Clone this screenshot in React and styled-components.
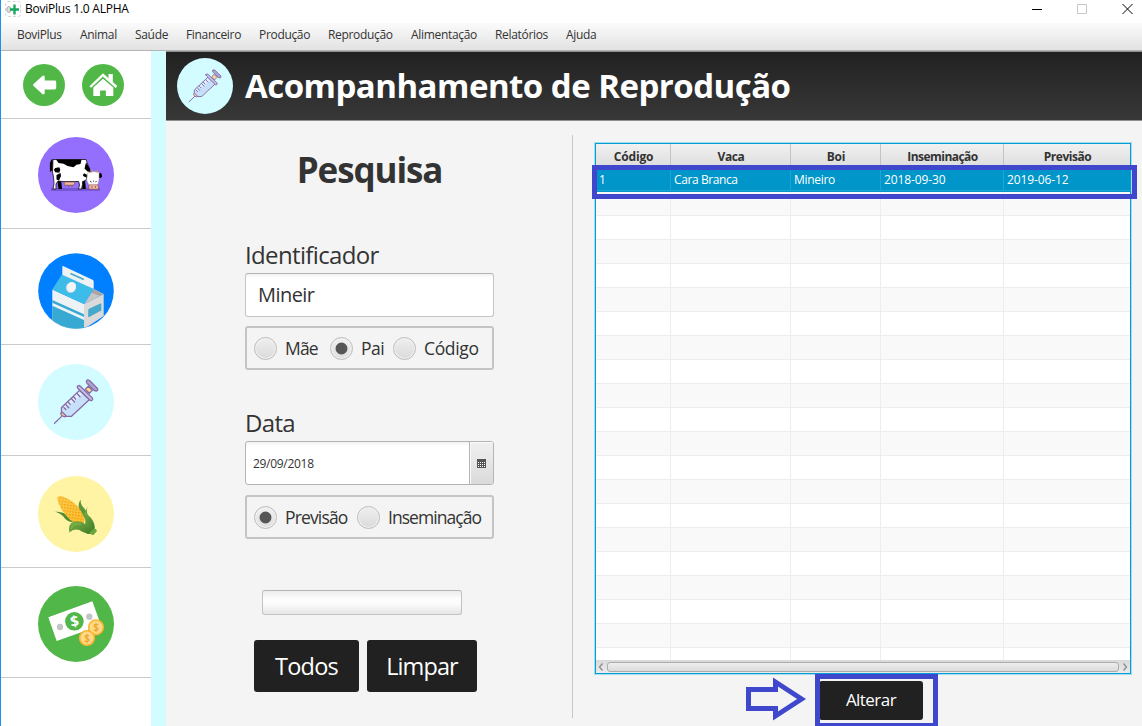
import React from 'react';
import styled, { createGlobalStyle, css } from 'styled-components';

const Global = createGlobalStyle`
  * { box-sizing: border-box; }
  body { margin: 0; overflow: hidden; }
  svg { display: block; }
`;

const Window = styled.div`
  position: relative;
  display: flex;
  flex-direction: column;
  width: 1142px;
  height: 726px;
  overflow: hidden;
  background: #fff;
  border-left: 1px solid #1b90f5;
  font-family: 'Open Sans', 'Noto Sans', sans-serif;
  font-size: 12px;
  letter-spacing: -0.03em;
  color: #333;
  white-space: nowrap;
`;

const TitleBar = styled.header`
  display: flex;
  align-items: flex-start;
  justify-content: space-between;
  height: 23px;
  padding: 1px 9px 0 4px;
  color: #000;
`;

const AppName = styled.div`
  display: flex;
  align-items: center;
  gap: 4px;
  height: 16px;
  line-height: 16px;
  letter-spacing: -0.24px;
`;

const WindowControls = styled.div`
  display: flex;
  gap: 34px;
  padding-top: 2px;
`;

const MenuBar = styled.nav`
  display: flex;
  flex: none;
  height: 28px;
  padding-left: 16px;
  background: linear-gradient(#fbfbfb, #e2e2e2);
  border-bottom: 1px solid #b4b4b4;
`;

const MenuItem = styled.span`
  width: ${(p) => p.$width}px;
  line-height: 24px;
  letter-spacing: -0.32px;
`;

const Body = styled.div`
  display: flex;
  flex: 1;
  min-height: 0;
`;

const Sidebar = styled.aside`
  width: 150px;
  flex: none;
`;

const NavButtons = styled.div`
  display: flex;
  gap: 17px;
  height: 68px;
  padding: 13px 0 0 22px;
  border-bottom: 1px solid #cbcbcb;
`;

const SideItem = styled.div`
  display: flex;
  justify-content: center;
  height: ${(p) => p.$height}px;
  padding-top: ${(p) => p.$top}px;
  border-bottom: 1px solid #cbcbcb;
`;

const Stripe = styled.div`
  width: 15px;
  flex: none;
  background: #d2fcff;
`;

const Main = styled.main`
  display: flex;
  flex: 1;
  flex-direction: column;
  min-width: 0;
  background: #f4f4f4;
`;

const PageHeader = styled.div`
  display: flex;
  align-items: center;
  gap: 12px;
  height: 70px;
  padding: 0 0 0 11px;
  background: linear-gradient(#212121, #383838);
  border-top: 1px solid #8f8f8f;
  border-bottom: 1px solid #8f8f8f;
`;

const PageTitle = styled.h1`
  margin: 0;
  color: #fff;
  font-size: 33px;
  font-weight: 700;
  line-height: 66px;
  letter-spacing: -0.52px;
`;

const Content = styled.div`
  display: flex;
  flex: 1;
  min-height: 0;
`;

const SearchPanel = styled.section`
  display: flex;
  flex-direction: column;
  width: 407px;
  margin: 14px 0 8px;
  padding: 0 78px 0 79px;
  border-right: 1px solid #c8c8c8;
`;

const SearchTitle = styled.h2`
  margin: 9px 0 42px;
  height: 50px;
  font-size: 35px;
  font-weight: 700;
  line-height: 52px;
  letter-spacing: -1.1px;
  text-align: center;
`;

const FieldLabel = styled.label`
  flex: none;
  height: 37px;
  font-size: 24px;
  line-height: 38px;
  letter-spacing: -0.65px;
`;

const fieldBox = css`
  display: flex;
  align-items: center;
  flex: none;
  height: 44px;
  background: linear-gradient(#f2f2f2, #fff 4px);
  border: 1px solid #c4c4c4;
  border-top-color: #b4b4b4;
  border-radius: 3px;
`;

const TextField = styled.div`
  ${fieldBox}
  padding: 0 0 2px 12px;
  font-size: 20px;
  letter-spacing: -0.55px;
`;

const DateField = styled.div`
  ${fieldBox}
  justify-content: space-between;
  padding-left: 7px;
  border-color: #b4b4b4;
  letter-spacing: -0.3px;
`;

const CalendarButton = styled.div`
  display: flex;
  align-items: center;
  justify-content: center;
  width: 24px;
  height: 42px;
  background: linear-gradient(#f0f0f0, #dadada);
  border-left: 1px solid #b4b4b4;
  border-radius: 0 2px 2px 0;
  box-shadow: inset 1px 1px 0 #fafafa;
`;

const RadioGroup = styled.div`
  display: flex;
  align-items: center;
  flex: none;
  height: 44px;
  margin: ${(p) => p.$before}px 0 ${(p) => p.$after}px;
  padding-left: 7px;
  border: 2px solid #c4c4c4;
  border-radius: 3px;
  font-size: 17.5px;
`;

const RadioOption = styled.label`
  display: flex;
  align-items: center;
  gap: 8px;
  flex: none;
  width: ${(p) => p.$width}px;
  letter-spacing: ${(p) => p.$spacing}px;
`;

const RadioDot = styled.span`
  flex: none;
  width: 23px;
  height: 23px;
  border: 1px solid #bcbcbc;
  border-radius: 50%;
  background: ${(p) =>
    p.$checked
      ? 'radial-gradient(circle, #555 5.4px, transparent 6.4px), linear-gradient(#efefef, #dedede)'
      : 'linear-gradient(#efefef, #dadada)'};
  box-shadow: inset 0 0 0 1px #f3f3f3;
`;

const Progress = styled.div`
  width: 200px;
  height: 25px;
  flex: none;
  margin: 0 0 25px 17px;
  border: 1px solid #c2c2c2;
  border-top-color: #b4b4b4;
  border-radius: 3px;
  background: linear-gradient(#ececec, #fdfdfd 35%, #fcfcfc 55%, #e6e6e6);
`;

const ButtonRow = styled.div`
  display: flex;
  gap: 8px;
  margin-left: 9px;
`;

const DarkButton = styled.div`
  display: flex;
  align-items: center;
  justify-content: center;
  width: ${(p) => p.$width}px;
  height: ${(p) => p.$height}px;
  padding-bottom: ${(p) => p.$lift || 0}px;
  background: #212121;
  border-radius: 3px;
  color: #fff;
  font-size: ${(p) => p.$size}px;
  letter-spacing: ${(p) => p.$spacing}px;
`;

const Results = styled.section`
  display: flex;
  flex-direction: column;
  align-items: flex-start;
  padding: 22px 0 0 22px;
`;

const TableFrame = styled.div`
  display: flex;
  flex-direction: column;
  width: 536px;
  height: 531px;
  margin-bottom: 7px;
  overflow: hidden;
  background: #fff;
  border: 1px solid #039ed3;
  box-shadow: 0 0 0 1px #a5dcee;
`;

const gridColumns = css`
  display: grid;
  grid-template-columns: 75px 120px 90px 123px 1fr;
  flex: none;
  height: 24px;
`;

const HeadRow = styled.div`
  ${gridColumns}
  background: linear-gradient(#f1f1f1, #dcdcdc);
  font-weight: 700;
  text-align: center;
`;

const HeadCell = styled.div`
  padding-left: 1px;
  line-height: 25px;
  letter-spacing: ${(p) => p.$spacing}px;
  border-right: 1px solid #c4c4c4;
  &:last-child { border-right: 0; }
`;

const Row = styled.div`
  ${gridColumns}
  background: ${(p) => (p.$selected ? '#0096c9' : p.$odd ? '#f9f9f9' : '#fff')};
  color: #fff;
`;

const Cell = styled.div`
  height: ${(p) => (p.$selected ? 23 : 24)}px;
  padding-left: 3px;
  line-height: 23px;
  letter-spacing: ${(p) => p.$spacing}px;
  border-right: 1px solid ${(p) => (p.$selected ? '#1fa5d2' : '#ededed')};
  border-bottom: 1px solid ${(p) => (p.$selected ? '#1fa5d2' : '#ededed')};
  &:last-child { border-right: 0; }
`;

const Rows = styled.div`
  flex: 1;
  min-height: 0;
  overflow: hidden;
`;

const ScrollBar = styled.div`
  display: flex;
  align-items: center;
  justify-content: space-between;
  flex: none;
  height: 13px;
  padding: 0 2px;
  background: linear-gradient(#d9d9d9, #ebebeb);
`;

const Thumb = styled.div`
  width: 512px;
  height: 10px;
  border: 1px solid #ababab;
  border-radius: 3px;
  background: linear-gradient(#eeeeee, #dadada);
`;

const ActionSlot = styled.div`
  margin-left: 224px;
`;

const Mark = styled.div`
  position: absolute;
  left: ${(p) => p.$x}px;
  top: ${(p) => p.$y}px;
  width: ${(p) => p.$w}px;
  height: ${(p) => p.$h}px;
  border: 5px solid #3f48cc;
`;

const ArrowMark = styled.svg`
  position: absolute;
  left: 744px;
  top: 676px;
`;

const AppLogo = () => (
  <svg width="16" height="16" viewBox="0 0 16 16">
    <rect x="0.5" y="0.5" width="15" height="15" rx="2" fill="#fff" stroke="#d5d5d5" strokeDasharray="3 2" />
    <ellipse cx="3.8" cy="8.5" rx="2" ry="3" fill="#ddd" stroke="#aaa" />
    <path d="M9.5 3.5v10M5 8.5h9" stroke="#19a85b" strokeWidth="2.4" />
  </svg>
);

const BackIcon = () => (
  <svg width="42" height="42" viewBox="0 0 42 42">
    <circle cx="21" cy="21" r="21" fill="#51b848" />
    <path d="M11.5 21 20.3 13v5h11.5v6H20.3v5z" fill="#fff" stroke="#fff" strokeWidth="2.8" strokeLinejoin="round" />
  </svg>
);

const HomeIcon = () => (
  <svg width="42" height="42" viewBox="0 0 42 42">
    <circle cx="21" cy="21" r="21" fill="#51b848" />
    <path d="M26.5 10h4.3v9l-4.3-4z" fill="#fff" />
    <path d="M8.3 23 21 11l13.5 12" fill="none" stroke="#fff" strokeWidth="2.4" />
    <path d="M11.3 23.5 21 14.8l10.3 8.7V32h-7.4v-5.5h-5.8V32h-6.8z" fill="#fff" />
  </svg>
);

const CowIcon = () => (
  <svg width="76" height="76" viewBox="0 0 76 76">
    <circle cx="38" cy="38" r="38" fill="#946efd" />
    <path d="M13 51h49v3H13z" fill="#7656d3" />
    <path d="M14.5 22.5 12.7 26v7.5l1.5-1V25" fill="none" stroke="#000" strokeWidth="1.6" />
    <path d="M19 41h4l1 11h-3.500zM44 42h3l.8 10h-3.500z" fill="#000" />
    <path d="M15 22.500h33l2.500 7 2 5.500-3 5-2 3.500-3 1v3l-1 4.500h-3l1-4-.8-3.500H25l-5-.5-2 3v5h-3l1-5.500-.5-6.500-1-5z" fill="#fff" stroke="#111" strokeWidth=".8" />
    <path d="M18 22.500h25.500l-1 4.500-4 .8-3 2.500-6-1.200-4-2.300-5-.8zM17.300 31l4-.8 1 2.500-1 3-4-.5-1.500-2.500zM18.500 38l4-2 .5 3-2 4.500-2.500-1zM48 25.500l3.500 5 1.500 4.500-3.500-.500-3-3z" fill="#000" />
    <path d="M26 45h11l-1 3h-1.500v1.500h-1V48h-2v1.500h-1V48H28v1h-1z" fill="#f2b8a3" stroke="#7a4b3c" strokeWidth=".6" />
    <path d="M49.500 38.500 46 36.800l-.5 2 3.500 1.500zM61 37l2-.5 .5 3.500-2 .5z" fill="#000" stroke="#000" />
    <path d="M49.500 36 55 34.500l6 .8v7.700l-1.300 5-8.500 1-2.500-6z" fill="#fff" stroke="#999" strokeWidth=".5" />
    <path d="m53.500 35.500-.8-2.500M59 35.500l.6-2.500" stroke="#d9896b" strokeWidth="1.200" />
    <path d="m52 44 1.500 1.200M55 44.200h1M58.500 44l-1 1.200" stroke="#222" strokeWidth=".9" />
    <path d="M51 47.800h9l.5 4.400H50.800z" fill="#f4b49f" stroke="#6b4335" strokeWidth=".5" />
    <path d="M54 49.500v1M57.500 49.500v1" stroke="#333" strokeWidth="1" />
  </svg>
);

const MilkIcon = () => (
  <svg width="76" height="76" viewBox="0 0 76 76">
    <defs>
      <clipPath id="milkRound"><circle cx="38" cy="38" r="37.7" /></clipPath>
    </defs>
    <circle cx="38" cy="38" r="37.8" fill="#0080ff" />
    <g clipPath="url(#milkRound)">
      <path d="M14.3 36.5 46 51v25H14.3z" fill="#edf3f5" />
      <path d="M14.3 47 46 61.3V64L14.3 49.8zM14.3 52.7 46 67v9H14.3z" fill="#38a9d2" />
      <path d="M46 51 65.7 41v22L46 76z" fill="#dadada" />
      <path d="M55.7 36 65.7 41 46 51z" fill="#c6c4c4" />
      <path d="m55.7 36 10 5-4 1.8-8.5-3z" fill="#aaa5a6" />
      <path d="M51 55.8 62.3 50.6q1-.3 1 .6v6.3L51.2 64q-1 .3-1-.6v-6.4z" fill="#45a9cc" />
      <path d="M24.3 21 55.7 36 46 51 14.3 36.5z" fill="#3ebce9" />
      <path d="M24.3 14q0-1.3 1.3-.8L54.5 26.7q1.2.6 1.2 2V36L24.3 21.8z" fill="#eef2f4" />
      <path d="m32.5 20.5 13.3 6" stroke="#43aace" strokeWidth="1.8" />
      <ellipse cx="33" cy="34.4" rx="5" ry="5.5" fill="#d9dfe2" transform="rotate(25 33 34.4)" />
      <ellipse cx="33.6" cy="34" rx="4.3" ry="5" fill="#f3f5f6" transform="rotate(25 33.6 34)" />
    </g>
  </svg>
);

const SyringeIcon = ({ size }) => (
  <svg width={size} height={size} viewBox="0 0 76 76">
    <circle cx="38" cy="38" r="38" fill="#d2fcff" />
    <g stroke="#8a6aa6" strokeWidth="1.3" strokeLinejoin="round" strokeLinecap="round">
      <path d="m16.5 59.3 7.5-7.2" />
      <path d="m24.5 47.5 4.2 4.3-2.5 1-2.7-1.5-.8-2z" fill="#ffd98c" />
      <path d="M41.5 26.5 23.5 43.5v4l5 4.8h5L51.5 35.5z" fill="#c6e0fa" />
      <path d="m41.5 27.5-16 15.5v2l8-5.5 11-9z" fill="#dff0fd" stroke="none" />
      <path d="m39 29.5 3 3.2M35.5 32.7l2.2 2.3M33.5 34.8l3 3.2M30 38l2.2 2.3M27.7 40.5l3 3.2M25.8 43.5l2 2" fill="none" />
      <path d="m47.3 25.3 3-3 4 4-3 3z" fill="#ffd98c" />
      <path d="M39.3 22.5q1.5-1.8 3-.3L54.3 34q1 2-.8 2.5-1 .3-2-.8L40 24.5q-.8-1-.7-2z" fill="#c3c6e8" />
      <path d="M48.5 16.8q1.2-1.6 3-.3l8 8q.8 2-.8 2.5l-2.5-.5-7-7q-1.2-1.3-.7-2.7z" fill="#a9a6cf" />
    </g>
  </svg>
);

const CornIcon = () => (
  <svg width="76" height="76" viewBox="0 0 76 76">
    <defs>
      <linearGradient id="cob" x1="0" y1="0" x2="1" y2="1">
        <stop offset="0" stopColor="#f7c53e" />
        <stop offset="1" stopColor="#fbb116" />
      </linearGradient>
      <linearGradient id="husk" x1="0" y1="0" x2="1" y2="1">
        <stop offset="0" stopColor="#7eb446" />
        <stop offset="1" stopColor="#3d7a28" />
      </linearGradient>
      <pattern id="kernels" width="3" height="3" patternUnits="userSpaceOnUse" patternTransform="rotate(8)">
        <rect x="0" y="0" width="1.5" height="1.5" fill="#f28a0f" opacity=".5" />
        <rect x="1.5" y="1.5" width="1.5" height="1.5" fill="#ffe36e" opacity=".6" />
      </pattern>
    </defs>
    <circle cx="38" cy="38" r="38" fill="#fff3a4" />
    <path d="M17 35.500q9 .5 13 4l8 6-5 .5q-5-1-8-6-3-3-8-4.500z" fill="#4f8d34" />
    <path d="M42.500 23.500q-4 7 .5 13l5 8 1.500-6q-1-4-4-7-3-3-3-8z" fill="#5a9738" />
    <path d="M19.200 22q1-3 6-1.300 8 3 14 9.300 5 5.500 7.300 13l-1 6-8-1.500q-7-4-12.500-12-5-7-5.800-13.500z" fill="url(#cob)" />
    <path d="M19.200 22q1-3 6-1.300 8 3 14 9.300 5 5.500 7.300 13l-1 6-8-1.500q-7-4-12.500-12-5-7-5.800-13.500z" fill="url(#kernels)" />
    <path d="M49.500 30.500q-1 4 0 8 7 6 7.300 13l-.8 4.500-6 2q-8-3-3-9.500 1-4-1-10 2-4 3.500-8z" fill="url(#husk)" />
    <path d="M31.500 56.500q-2-8 4-11 8-1.500 12 3l7 4.500-2 5q-7-1-11-4-6-2-10 2.500z" fill="url(#husk)" />
    <path d="M33 53q2-6 10-5" fill="none" stroke="#89b955" strokeWidth=".8" />
    <path d="m51.500 56.500 4.500-4q2.500 0 3 2.500l-3.500 4q-3 0-4-2.500z" fill="#69a63d" />
  </svg>
);

const MoneyIcon = () => (
  <svg width="76" height="76" viewBox="0 0 76 76" fontFamily="'Open Sans', sans-serif" textAnchor="middle" letterSpacing="0">
    <circle cx="38" cy="38" r="38" fill="#51b748" />
    <path d="M10.300 31.300 54.300 15.300 63 39.200 18.700 55z" fill="#fff" />
    <circle cx="36.400" cy="35.300" r="9.300" fill="#51b748" />
    <text x="36.600" y="40.700" fontSize="15" fontWeight="700" fill="#fff" transform="rotate(-10 36.400 35.300)">$</text>
    <circle cx="22" cy="41" r="3.200" fill="#c4c4c4" />
    <circle cx="51.300" cy="30.700" r="3.200" fill="#c4c4c4" />
    <circle cx="58" cy="41.300" r="7.300" fill="#ffd98b" stroke="#fdb52b" strokeWidth="1.600" />
    <circle cx="49" cy="52" r="7.300" fill="#ffd98b" stroke="#fdb52b" strokeWidth="1.600" />
    <text x="58" y="44.900" fontSize="10" fill="#eba51c" stroke="#eba51c" strokeWidth=".3">$</text>
    <text x="49" y="55.600" fontSize="10" fill="#eba51c" stroke="#eba51c" strokeWidth=".3">$</text>
  </svg>
);

const CalendarIcon = () => (
  <svg width="9" height="9" viewBox="0 0 9 9" shapeRendering="crispEdges">
    <path d="M0 0h9v9H0z" fill="#555" />
    <path d="M1 3.500h7M1 5.500h7M1 7.500h7" stroke="#fff" strokeDasharray="1 1" />
  </svg>
);

const Chevron = ({ d }) => (
  <svg width="6" height="8" viewBox="0 0 6 8">
    <path d={d} fill="none" stroke="#8c8c8c" strokeWidth="1.300" />
  </svg>
);

const menu = [
  ['BoviPlus', 63], ['Animal', 55], ['Saúde', 51], ['Financeiro', 73], ['Produção', 69],
  ['Reprodução', 83], ['Alimentação', 84], ['Relatórios', 71], ['Ajuda', 40],
];

const sideItems = [
  { id: 'animal', height: 110, top: 18, icon: <CowIcon /> },
  { id: 'milk', height: 116, top: 24, icon: <MilkIcon /> },
  { id: 'breeding', height: 111, top: 19, icon: <SyringeIcon size={76} /> },
  { id: 'feed', height: 112, top: 20, icon: <CornIcon /> },
  { id: 'finance', height: 110, top: 18, icon: <MoneyIcon /> },
];

const columns = [['Código', -0.15], ['Vaca', -0.4], ['Boi', -0.3], ['Inseminação', -0.55], ['Previsão', -0.45]];
const animal = [['1', 0], ['Cara Branca', -0.4], ['Mineiro', -0.3], ['2018-09-30', -0.1], ['2019-06-12', -0.1]];

const Radio = ({ label, checked, width, spacing }) => (
  <RadioOption $width={width} $spacing={spacing}>
    <RadioDot $checked={checked} />
    {label}
  </RadioOption>
);

export default function App() {
  return (
    <Window>
      <Global />
      <TitleBar>
        <AppName><AppLogo />BoviPlus 1.0 ALPHA</AppName>
        <WindowControls>
          <svg width="11" height="11"><path d="M0 6.500h10" stroke="#000" /></svg>
          <svg width="11" height="11"><path d="M.5 1.500h9v9h-9z" fill="none" stroke="#c8c8c8" /></svg>
          <svg width="11" height="11"><path d="m.5 1 10 10M10.500 1l-10 10" stroke="#000" /></svg>
        </WindowControls>
      </TitleBar>
      <MenuBar>
        {menu.map(([name, width]) => <MenuItem key={name} $width={width}>{name}</MenuItem>)}
      </MenuBar>
      <Body>
        <Sidebar>
          <NavButtons><BackIcon /><HomeIcon /></NavButtons>
          {sideItems.map(({ id, height, top, icon }) => (
            <SideItem key={id} $height={height} $top={top}>{icon}</SideItem>
          ))}
        </Sidebar>
        <Stripe />
        <Main>
          <PageHeader>
            <SyringeIcon size={56} />
            <PageTitle>Acompanhamento de Reprodução</PageTitle>
          </PageHeader>
          <Content>
            <SearchPanel>
              <SearchTitle>Pesquisa</SearchTitle>
              <FieldLabel>Identificador</FieldLabel>
              <TextField>Mineir</TextField>
              <RadioGroup $before={9} $after={34}>
                <Radio label="Mãe" width={76} spacing={-0.8} />
                <Radio label="Pai" width={63} spacing={-0.5} checked />
                <Radio label="Código" width={80} spacing={-0.35} />
              </RadioGroup>
              <FieldLabel>Data</FieldLabel>
              <DateField>
                29/09/2018
                <CalendarButton><CalendarIcon /></CalendarButton>
              </DateField>
              <RadioGroup $before={10} $after={51}>
                <Radio label="Previsão" width={103} spacing={-0.85} checked />
                <Radio label="Inseminação" width={125} spacing={-0.95} />
              </RadioGroup>
              <Progress />
              <ButtonRow>
                <DarkButton $width={105} $height={52} $size={23.500} $spacing={-0.8} $lift={1}>Todos</DarkButton>
                <DarkButton $width={110} $height={52} $size={23.500} $spacing={-0.9} $lift={1}>Limpar</DarkButton>
              </ButtonRow>
            </SearchPanel>
            <Results>
              <TableFrame>
                <HeadRow>
                  {columns.map(([name, spacing]) => <HeadCell key={name} $spacing={spacing}>{name}</HeadCell>)}
                </HeadRow>
                <Rows>
                  {Array.from({ length: 21 }, (_, r) => (
                    <Row key={r} $selected={r === 0} $odd={r % 2 === 1}>
                      {animal.map(([value, spacing]) => (
                        <Cell key={value} $selected={r === 0} $spacing={spacing}>{r === 0 ? value : ''}</Cell>
                      ))}
                    </Row>
                  ))}
                </Rows>
                <ScrollBar>
                  <Chevron d="M4.500 .5 1.500 4l3 3.500" />
                  <Thumb />
                  <Chevron d="m1.500 .5 3 3.500-3 3.500" />
                </ScrollBar>
              </TableFrame>
              <ActionSlot>
                <DarkButton $width={104} $height={39} $size={17} $spacing={-0.55} $lift={2}>Alterar</DarkButton>
              </ActionSlot>
            </Results>
          </Content>
        </Main>
      </Body>
      <Mark $x={591} $y={165} $w={545} $h={34} />
      <Mark $x={814} $y={674} $w={123} $h={54} />
      <ArrowMark width="64" height="46" viewBox="745 676 64 46">
        <path d="M748.500 689.500h27V682l26 17-26 17v-7.500h-27z" fill="none" stroke="#3f48cc" strokeWidth="5" />
      </ArrowMark>
    </Window>
  );
}
